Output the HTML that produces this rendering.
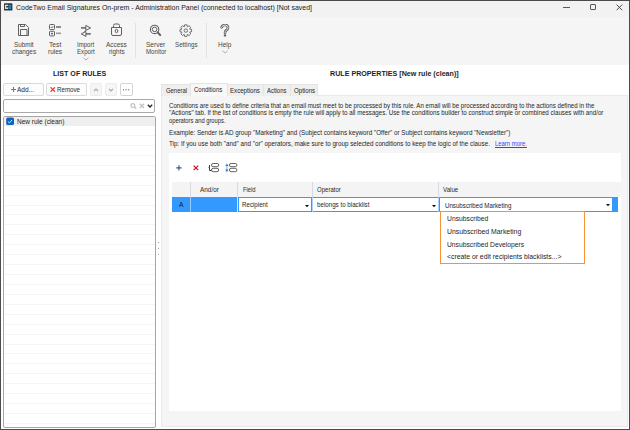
<!DOCTYPE html>
<html><head><meta charset="utf-8"><style>
html,body{margin:0;padding:0;width:630px;height:430px;overflow:hidden;background:#fff}
body{position:relative;font-family:"Liberation Sans", sans-serif}
.t{position:absolute;white-space:pre;transform-origin:0 0}
.b{position:absolute;display:block}
</style></head><body>
<div class="b" style="left:0px;top:0px;width:630px;height:430px;background:#fff"></div>
<div class="b" style="left:1px;top:1px;width:628px;height:16px;background:#f2f2f2"></div>
<div class="b" style="left:1px;top:17px;width:628px;height:48px;background:#f5f5f5"></div>
<svg class="b" style="left:0px;top:0px" width="15" height="13" viewBox="0 0 15 13"><rect x="4" y="3.3" width="8.4" height="7.3" rx="0.7" fill="#333"/><path d="M4.9,4.8 H8 V6.1 H6.2 V7.6 H8 V8.9 H4.9 Z" fill="#dcdcdc"/><path d="M8.4,4.8 H11.1 V7.5 H9.7 V7.7 H11.1 V8.9 H8.4 V6.6 H9.8 V6.1 H8.4 Z" fill="#1c8fd2"/></svg>
<div class="t" style="left:16.00px;top:3px;font-size:8.0px;line-height:10px;color:#1b1b1b;transform:scaleX(0.8701);">CodeTwo Email Signatures On-prem - Administration Panel (connected to localhost) [Not saved]</div>
<div class="b" style="left:563px;top:7px;width:7px;height:1px;background:#5a5a5a"></div>
<div class="b" style="left:590px;top:4px;width:6px;height:6px;border:1px solid #555;border-radius:1px;box-sizing:border-box"></div>
<svg class="b" style="left:616px;top:4px" width="7" height="7" viewBox="0 0 7 7"><path d="M0.6,0.6 L6.2,6.2 M6.2,0.6 L0.6,6.2" stroke="#4a4a4a" stroke-width="1"/></svg>
<svg class="b" style="left:18px;top:24px" width="12" height="12" viewBox="0 0 12 12"><g fill="none" stroke="#606060" stroke-width="1"><path d="M0.5,0.5 H7.5 L10.5,3.5 V11.5 H0.5 Z"/><path d="M2.5,0.5 V2.5 H6.5 V0.5"/><path d="M2.5,11.5 V5.5 H9 V11.5"/></g></svg>
<svg class="b" style="left:49px;top:24px" width="12" height="13" viewBox="0 0 12 13"><g fill="none" stroke="#606060" stroke-width="1"><rect x="0.5" y="0.5" width="5" height="5" rx="0.8"/><rect x="0.5" y="7.3" width="5" height="4.6" rx="0.8"/></g><path d="M1.7,3 L2.7,4 L4.4,2" stroke="#606060" stroke-width="0.9" fill="none"/><rect x="2.1" y="8.8" width="1.8" height="1.6" fill="#606060"/><rect x="7" y="2.3" width="5" height="1.4" fill="#606060"/><rect x="7" y="8.5" width="5" height="1.6" fill="#9a9a9a"/></svg>
<svg class="b" style="left:80px;top:24px" width="12" height="13" viewBox="0 0 12 13"><g fill="none" stroke="#606060" stroke-linejoin="round"><path d="M1,3.9 H5.8" stroke-width="1.5"/><path d="M5.8,1.4 L10.6,3.9 L5.8,6.3 Z" stroke-width="1"/><path d="M6.2,6.1 L4.2,8" stroke-width="0.9"/><path d="M5.9,9.9 H10.8" stroke-width="1.5"/><path d="M5.9,7.4 L1.2,9.9 L5.9,12.4 Z" stroke-width="1"/></g></svg>
<svg class="b" style="left:110px;top:23px" width="13" height="13" viewBox="0 0 13 13"><g fill="none" stroke="#606060" stroke-width="1"><path d="M3.5,4.2 V2.5 Q3.5,1 5,1 H8 Q9.5,1 9.5,2.5 V4.2"/><path d="M1.5,4.5 H11.5 V11 Q11.5,12.5 10,12.5 H3 Q1.5,12.5 1.5,11 Z"/><ellipse cx="6.5" cy="8" rx="1.3" ry="1.7"/></g></svg>
<svg class="b" style="left:149px;top:24px" width="13" height="13" viewBox="0 0 13 13"><g fill="none" stroke="#606060"><circle cx="5.6" cy="5.4" r="4.2" stroke-width="1.1"/><circle cx="5.6" cy="5.4" r="2.3" stroke-width="1"/><path d="M8.6,8.4 L11.2,11" stroke-width="2" stroke-linecap="round"/></g></svg>
<svg class="b" style="left:179px;top:24px" width="14" height="14" viewBox="0 0 14 14"><g fill="none" stroke="#606060" stroke-width="0.9" stroke-linejoin="round"><polygon points="5.28,2.79 5.63,0.82 7.97,0.82 8.32,2.79 8.42,2.83 10.06,1.68 11.72,3.34 10.57,4.98 10.61,5.08 12.58,5.43 12.58,7.77 10.61,8.12 10.57,8.22 11.72,9.86 10.06,11.52 8.42,10.37 8.32,10.41 7.97,12.38 5.63,12.38 5.28,10.41 5.18,10.37 3.54,11.52 1.88,9.86 3.03,8.22 2.99,8.12 1.02,7.77 1.02,5.43 2.99,5.08 3.03,4.98 1.88,3.34 3.54,1.68 5.18,2.83"/><circle cx="6.8" cy="6.6" r="1.7"/></g></svg>
<svg class="b" style="left:220px;top:24px" width="10" height="13" viewBox="0 0 10 13"><path d="M1.6,3.2 Q2.4,1 5,1 Q8,1 8,3.5 Q8,5.3 6.2,6.4 Q5,7.3 5,9" fill="none" stroke="#606060" stroke-width="2.6" stroke-linecap="round"/><path d="M1.6,3.2 Q2.4,1 5,1 Q8,1 8,3.5 Q8,5.3 6.2,6.4 Q5,7.3 5,9" fill="none" stroke="#f5f5f5" stroke-width="0.9" stroke-linecap="round"/><circle cx="5" cy="11.4" r="1.2" fill="#606060"/></svg>
<div class="b" style="left:135px;top:23px;width:1px;height:35px;background:#e2e2e2"></div>
<div class="b" style="left:206px;top:23px;width:1px;height:35px;background:#e2e2e2"></div>
<div class="t" style="left:14.00px;top:40px;font-size:6.45px;line-height:9px;color:#454545;transform:scaleX(0.9777);">Submit</div>
<div class="t" style="left:11.75px;top:47px;font-size:6.45px;line-height:9px;color:#454545;transform:scaleX(0.9900);">changes</div>
<div class="t" style="left:48.85px;top:40px;font-size:6.45px;line-height:9px;color:#454545;transform:scaleX(1.0413);">Test</div>
<div class="t" style="left:48.05px;top:47px;font-size:6.45px;line-height:9px;color:#454545;">rules</div>
<div class="t" style="left:76.80px;top:40px;font-size:6.45px;line-height:9px;color:#454545;transform:scaleX(0.9425);">Import</div>
<div class="t" style="left:76.55px;top:47px;font-size:6.45px;line-height:9px;color:#454545;transform:scaleX(0.9511);">Export</div>
<div class="t" style="left:106.05px;top:40px;font-size:6.45px;line-height:9px;color:#454545;">Access</div>
<div class="t" style="left:108.60px;top:47px;font-size:6.45px;line-height:9px;color:#454545;transform:scaleX(0.9905);">rights</div>
<div class="t" style="left:146.40px;top:40px;font-size:6.45px;line-height:9px;color:#454545;transform:scaleX(1.0122);">Server</div>
<div class="t" style="left:145.80px;top:47px;font-size:6.45px;line-height:9px;color:#454545;transform:scaleX(0.9502);">Monitor</div>
<div class="t" style="left:175.05px;top:40px;font-size:6.45px;line-height:9px;color:#454545;transform:scaleX(0.9671);">Settings</div>
<div class="t" style="left:217.80px;top:40px;font-size:6.45px;line-height:9px;color:#454545;transform:scaleX(1.0113);">Help</div>
<svg class="b" style="left:83px;top:57px" width="6" height="4" viewBox="0 0 6 4"><path d="M0.5,0.8 L3,3 L5.5,0.8" fill="none" stroke="#9a9a9a" stroke-width="0.8"/></svg>
<svg class="b" style="left:222px;top:50px" width="6" height="4" viewBox="0 0 6 4"><path d="M0.5,0.8 L3,3 L5.5,0.8" fill="none" stroke="#9a9a9a" stroke-width="0.8"/></svg>
<div class="t" style="left:52.70px;top:69px;font-size:7.5px;line-height:10px;color:#1e1e1e;font-weight:bold;transform:scaleX(0.9476);">LIST OF RULES</div>
<div class="b" style="left:3px;top:83px;width:41px;height:13px;border:1px solid #dadada;border-radius:2px;background:#fdfdfd;box-sizing:border-box"></div>
<svg class="b" style="left:11px;top:87px" width="5" height="5" viewBox="0 0 5 5"><path d="M2.5,0 V5 M0,2.5 H5" stroke="#3aa34a" stroke-width="1.1"/></svg>
<div class="t" style="left:17.00px;top:85px;font-size:6.9px;line-height:9px;color:#2a2a2a;transform:scaleX(0.9492);">Add...</div>
<div class="b" style="left:46px;top:83px;width:41px;height:13px;border:1px solid #dadada;border-radius:2px;background:#fdfdfd;box-sizing:border-box"></div>
<svg class="b" style="left:50px;top:87px" width="6" height="5" viewBox="0 0 6 5"><path d="M0.6,0.3 L5,4.7 M5,0.3 L0.6,4.7" stroke="#e2401c" stroke-width="1.2"/></svg>
<div class="t" style="left:56.70px;top:85px;font-size:6.9px;line-height:9px;color:#2a2a2a;transform:scaleX(0.8959);">Remove</div>
<div class="b" style="left:90px;top:83px;width:12px;height:13px;border:1px solid #ececec;border-radius:2px;background:#f6f6f6;box-sizing:border-box"></div>
<svg class="b" style="left:93px;top:88px" width="6" height="4" viewBox="0 0 6 4"><path d="M1,3.2 L3,1.2 L5,3.2" fill="none" stroke="#a6a6a6" stroke-width="1.2"/></svg>
<div class="b" style="left:105px;top:83px;width:12px;height:13px;border:1px solid #ececec;border-radius:2px;background:#f6f6f6;box-sizing:border-box"></div>
<svg class="b" style="left:108px;top:88px" width="6" height="4" viewBox="0 0 6 4"><path d="M1,0.8 L3,2.8 L5,0.8" fill="none" stroke="#a6a6a6" stroke-width="1.2"/></svg>
<div class="b" style="left:120px;top:83px;width:13px;height:13px;border:1px solid #d4d4d4;border-radius:2px;background:#fff;box-sizing:border-box"></div>
<svg class="b" style="left:122px;top:89px" width="8" height="2" viewBox="0 0 8 2"><rect x="1" y="0.2" width="1.1" height="1.1" fill="#666"/><rect x="3.6" y="0.2" width="1.1" height="1.1" fill="#666"/><rect x="6.2" y="0.2" width="1.1" height="1.1" fill="#666"/></svg>
<div class="b" style="left:3px;top:99px;width:152px;height:14px;border:1px solid #a9a9a9;border-radius:2px;background:#fff;box-sizing:border-box"></div>
<svg class="b" style="left:130px;top:103px" width="7" height="6" viewBox="0 0 7 6"><circle cx="2.9" cy="2.6" r="1.9" fill="none" stroke="#c2c2c2" stroke-width="1.2"/><path d="M4.3,4 L6.2,5.8" stroke="#c2c2c2" stroke-width="1.3"/></svg>
<svg class="b" style="left:139px;top:103px" width="6" height="6" viewBox="0 0 6 6"><path d="M0.8,0.8 L5,5 M5,0.8 L0.8,5" stroke="#c4c4c4" stroke-width="1.4"/></svg>
<svg class="b" style="left:147px;top:104px" width="6" height="4" viewBox="0 0 6 4"><path d="M0.8,0.8 L3,3 L5.2,0.8" fill="none" stroke="#222" stroke-width="1.3"/></svg>
<div class="b" style="left:3px;top:116px;width:153px;height:312px;border:1px solid #a6a6a6;border-radius:2px;background:#fff;box-sizing:border-box"></div>
<div class="b" style="left:4px;top:117px;width:151px;height:9px;background:#efefef"></div>
<div class="b" style="left:4px;top:135px;width:151px;height:1px;background:#f5f5f5"></div>
<div class="b" style="left:4px;top:145px;width:151px;height:1px;background:#f5f5f5"></div>
<div class="b" style="left:4px;top:155px;width:151px;height:1px;background:#f5f5f5"></div>
<div class="b" style="left:4px;top:165px;width:151px;height:1px;background:#f5f5f5"></div>
<div class="b" style="left:4px;top:175px;width:151px;height:1px;background:#f5f5f5"></div>
<div class="b" style="left:4px;top:185px;width:151px;height:1px;background:#f5f5f5"></div>
<div class="b" style="left:4px;top:195px;width:151px;height:1px;background:#f5f5f5"></div>
<div class="b" style="left:4px;top:205px;width:151px;height:1px;background:#f5f5f5"></div>
<div class="b" style="left:4px;top:214px;width:151px;height:1px;background:#f5f5f5"></div>
<div class="b" style="left:4px;top:224px;width:151px;height:1px;background:#f5f5f5"></div>
<div class="b" style="left:4px;top:234px;width:151px;height:1px;background:#f5f5f5"></div>
<div class="b" style="left:4px;top:244px;width:151px;height:1px;background:#f5f5f5"></div>
<div class="b" style="left:4px;top:254px;width:151px;height:1px;background:#f5f5f5"></div>
<div class="b" style="left:4px;top:264px;width:151px;height:1px;background:#f5f5f5"></div>
<div class="b" style="left:4px;top:274px;width:151px;height:1px;background:#f5f5f5"></div>
<div class="b" style="left:4px;top:284px;width:151px;height:1px;background:#f5f5f5"></div>
<div class="b" style="left:4px;top:294px;width:151px;height:1px;background:#f5f5f5"></div>
<div class="b" style="left:4px;top:304px;width:151px;height:1px;background:#f5f5f5"></div>
<div class="b" style="left:4px;top:314px;width:151px;height:1px;background:#f5f5f5"></div>
<div class="b" style="left:4px;top:324px;width:151px;height:1px;background:#f5f5f5"></div>
<div class="b" style="left:4px;top:334px;width:151px;height:1px;background:#f5f5f5"></div>
<div class="b" style="left:4px;top:344px;width:151px;height:1px;background:#f5f5f5"></div>
<div class="b" style="left:4px;top:353px;width:151px;height:1px;background:#f5f5f5"></div>
<div class="b" style="left:4px;top:363px;width:151px;height:1px;background:#f5f5f5"></div>
<div class="b" style="left:4px;top:373px;width:151px;height:1px;background:#f5f5f5"></div>
<div class="b" style="left:4px;top:383px;width:151px;height:1px;background:#f5f5f5"></div>
<div class="b" style="left:4px;top:393px;width:151px;height:1px;background:#f5f5f5"></div>
<div class="b" style="left:4px;top:403px;width:151px;height:1px;background:#f5f5f5"></div>
<div class="b" style="left:4px;top:413px;width:151px;height:1px;background:#f5f5f5"></div>
<div class="b" style="left:4px;top:423px;width:151px;height:1px;background:#f5f5f5"></div>
<svg class="b" style="left:5px;top:116px" width="10" height="11" viewBox="0 0 10 11"><rect x="1.2" y="1.6" width="7.8" height="7.5" rx="1.5" fill="#0a64c0"/><path d="M3,5.6 L4.4,6.9 L7,4" fill="none" stroke="#fff" stroke-width="0.8"/></svg>
<div class="t" style="left:17.00px;top:117px;font-size:6.9px;line-height:9px;color:#1e1e1e;transform:scaleX(0.9448);">New rule (clean)</div>
<div class="b" style="left:158px;top:242px;width:1px;height:1px;background:#a8a8a8"></div>
<div class="b" style="left:158px;top:248px;width:1px;height:1px;background:#a8a8a8"></div>
<div class="b" style="left:158px;top:254px;width:1px;height:1px;background:#a8a8a8"></div>
<div class="t" style="left:330.30px;top:69px;font-size:7.5px;line-height:10px;color:#1e1e1e;font-weight:bold;transform:scaleX(0.9501);">RULE PROPERTIES [New rule (clean)]</div>
<div class="b" style="left:161px;top:95px;width:467px;height:332px;background:#f5f5f5;border:1px solid #e9e9e9;box-sizing:border-box"></div>
<div class="b" style="left:161px;top:84px;width:30px;height:12px;background:#efefef;border:1px solid #e4e4e4;border-bottom:none;box-sizing:border-box"></div>
<div class="b" style="left:227px;top:84px;width:37px;height:12px;background:#efefef;border:1px solid #e4e4e4;border-bottom:none;box-sizing:border-box"></div>
<div class="b" style="left:263px;top:84px;width:28px;height:12px;background:#efefef;border:1px solid #e4e4e4;border-bottom:none;box-sizing:border-box"></div>
<div class="b" style="left:290px;top:84px;width:28px;height:12px;background:#efefef;border:1px solid #e4e4e4;border-bottom:none;box-sizing:border-box"></div>
<div class="b" style="left:190px;top:83px;width:38px;height:13px;background:#f8f8f8;border:1px solid #e4e4e4;border-bottom:none;box-sizing:border-box"></div>
<div class="t" style="left:165.90px;top:86px;font-size:7.3px;line-height:10px;color:#262626;transform:scaleX(0.8087);">General</div>
<div class="t" style="left:194.40px;top:85px;font-size:7.3px;line-height:10px;color:#262626;transform:scaleX(0.8178);">Conditions</div>
<div class="t" style="left:229.80px;top:86px;font-size:7.3px;line-height:10px;color:#262626;transform:scaleX(0.8375);">Exceptions</div>
<div class="t" style="left:267.30px;top:86px;font-size:7.3px;line-height:10px;color:#262626;transform:scaleX(0.8104);">Actions</div>
<div class="t" style="left:293.80px;top:86px;font-size:7.3px;line-height:10px;color:#262626;transform:scaleX(0.8388);">Options</div>
<div class="t" style="left:168.50px;top:101px;font-size:7.3px;line-height:10px;color:#262626;transform:scaleX(0.8424);">Conditions are used to define criteria that an email must meet to be processed by this rule. An email will be processed according to the actions defined in the</div>
<div class="t" style="left:168.50px;top:108px;font-size:7.3px;line-height:10px;color:#262626;transform:scaleX(0.8468);">"Actions" tab. If the list of conditions is empty the rule will apply to all messages. Use the conditions builder to construct simple or combined clauses with and/or</div>
<div class="t" style="left:168.50px;top:116px;font-size:7.3px;line-height:10px;color:#262626;transform:scaleX(0.7912);">operators and groups.</div>
<div class="t" style="left:168.50px;top:128px;font-size:7.3px;line-height:10px;color:#262626;transform:scaleX(0.8596);">Example: Sender is AD group "Marketing" and (Subject contains keyword "Offer" or Subject contains keyword "Newsletter")</div>
<div class="t" style="left:168.50px;top:139px;font-size:7.3px;line-height:10px;color:#262626;transform:scaleX(0.8591);">Tip: If you use both "and" and "or" operators, make sure to group selected conditions to keep the logic of the clause.</div>
<div class="t" style="left:495.00px;top:139px;font-size:7.3px;line-height:10px;color:#3b3bff;transform:scaleX(0.8108);text-decoration:underline">Learn more.</div>
<div class="b" style="left:169px;top:153px;width:452px;height:258px;background:#fff"></div>
<svg class="b" style="left:176px;top:165px" width="6" height="6" viewBox="0 0 6 6"><path d="M2.9,0.3 V5.5 M0.3,2.9 H5.5" stroke="#3d5672" stroke-width="1.1"/></svg>
<svg class="b" style="left:193px;top:165px" width="6" height="6" viewBox="0 0 6 6"><path d="M0.6,0.6 L5.2,5.2 M5.2,0.6 L0.6,5.2" stroke="#d0101a" stroke-width="1.2"/></svg>
<svg class="b" style="left:208px;top:163px" width="12" height="10" viewBox="0 0 12 10"><g fill="none" stroke="#505050" stroke-width="0.9"><rect x="3.5" y="0.5" width="7.2" height="3.2" rx="1.6"/><rect x="3.5" y="5.3" width="7.2" height="3.4" rx="1.7"/><path d="M1.5,2 V7.5 H3.3" stroke="#3a3a3a" stroke-width="1"/><path d="M0.1,4.5 H1.3" stroke="#9a9a9a"/></g></svg>
<svg class="b" style="left:225.4px;top:163px" width="13" height="10" viewBox="0 0 13 10"><g fill="none" stroke="#505050" stroke-width="0.9"><rect x="4.4" y="0.5" width="7.5" height="3.2" rx="1.6"/><rect x="4.4" y="5.3" width="7.5" height="3.4" rx="1.7"/></g><path d="M1.9,2.5 V7" stroke="#3b86d6" stroke-width="0.7"/><path d="M0.3,3.1 L1.9,0.4 L3.5,3.1 Z M0.3,6.5 L1.9,9.2 L3.5,6.5 Z" fill="#2a7fd4"/></svg>
<div class="b" style="left:172px;top:182px;width:449px;height:15px;background:#f4f4f4"></div>
<div class="b" style="left:190px;top:182px;width:1px;height:15px;background:#d9d9e2"></div>
<div class="b" style="left:237px;top:182px;width:1px;height:15px;background:#d9d9e2"></div>
<div class="b" style="left:312px;top:182px;width:1px;height:15px;background:#d9d9e2"></div>
<div class="b" style="left:438px;top:182px;width:1px;height:15px;background:#d9d9e2"></div>
<div class="t" style="left:199.90px;top:185px;font-size:7.0px;line-height:9px;color:#2a2a2a;transform:scaleX(0.9164);">And/or</div>
<div class="t" style="left:242.70px;top:185px;font-size:7.0px;line-height:9px;color:#2a2a2a;transform:scaleX(0.8230);">Field</div>
<div class="t" style="left:316.90px;top:185px;font-size:7.0px;line-height:9px;color:#2a2a2a;transform:scaleX(0.8615);">Operator</div>
<div class="t" style="left:443.30px;top:185px;font-size:7.0px;line-height:9px;color:#2a2a2a;transform:scaleX(0.8798);">Value</div>
<div class="b" style="left:172px;top:197px;width:446px;height:15px;background:#3399ff"></div>
<div class="b" style="left:190px;top:197px;width:1px;height:15px;background:#9ccbff"></div>
<div class="b" style="left:237px;top:197px;width:1px;height:15px;background:#cfe6ff"></div>
<div class="b" style="left:239px;top:198px;width:72px;height:13px;background:#fff"></div>
<div class="b" style="left:312px;top:197px;width:1px;height:15px;background:#a8d2ff"></div>
<div class="b" style="left:313px;top:198px;width:125px;height:13px;background:#fff"></div>
<div class="b" style="left:438px;top:197px;width:1px;height:15px;background:#a8d2ff"></div>
<div class="b" style="left:440px;top:198px;width:172px;height:13px;background:#fff"></div>
<div class="t" style="left:178.50px;top:201px;font-size:7.1px;line-height:9px;color:#0e1a2a;transform:scaleX(0.9505);">A</div>
<div class="t" style="left:242.30px;top:201px;font-size:7.1px;line-height:9px;color:#1e1e1e;transform:scaleX(0.8689);">Recipient</div>
<div class="t" style="left:316.90px;top:201px;font-size:7.1px;line-height:9px;color:#1e1e1e;transform:scaleX(0.8742);">belongs to blacklist</div>
<div class="t" style="left:444.50px;top:202px;font-size:7.1px;line-height:9px;color:#1e1e1e;transform:scaleX(0.8680);">Unsubscribed Marketing</div>
<svg class="b" style="left:305.3px;top:204.6px" width="4" height="3" viewBox="0 0 4 3"><path d="M0,0 H4 L2,2.3 Z" fill="#111"/></svg>
<svg class="b" style="left:432px;top:204.6px" width="4" height="3" viewBox="0 0 4 3"><path d="M0,0 H4 L2,2.3 Z" fill="#111"/></svg>
<svg class="b" style="left:606px;top:204.3px" width="4" height="3" viewBox="0 0 4 3"><path d="M0,0 H4 L2,2.3 Z" fill="#111"/></svg>
<div class="b" style="left:440px;top:211px;width:145px;height:53px;background:#fff;border:1px solid #f59434;box-sizing:border-box"></div>
<div class="t" style="left:446.80px;top:214px;font-size:7.4px;line-height:10px;color:#1c1c1c;transform:scaleX(0.9137);">Unsubscribed</div>
<div class="t" style="left:446.80px;top:227px;font-size:7.4px;line-height:10px;color:#1c1c1c;transform:scaleX(0.9322);">Unsubscribed Marketing</div>
<div class="t" style="left:446.80px;top:240px;font-size:7.4px;line-height:10px;color:#1c1c1c;transform:scaleX(0.9111);">Unsubscribed Developers</div>
<div class="t" style="left:446.80px;top:252px;font-size:7.4px;line-height:10px;color:#1c1c1c;transform:scaleX(0.9251);">&lt;create or edit recipients blacklists...&gt;</div>
<div class="b" style="left:0px;top:0px;width:630px;height:1px;background:#4a4a4a"></div>
<div class="b" style="left:0px;top:429px;width:630px;height:1px;background:#4a4a4a"></div>
<div class="b" style="left:0px;top:0px;width:1px;height:430px;background:#4a4a4a"></div>
<div class="b" style="left:629px;top:0px;width:1px;height:430px;background:#4a4a4a"></div>
</body></html>
